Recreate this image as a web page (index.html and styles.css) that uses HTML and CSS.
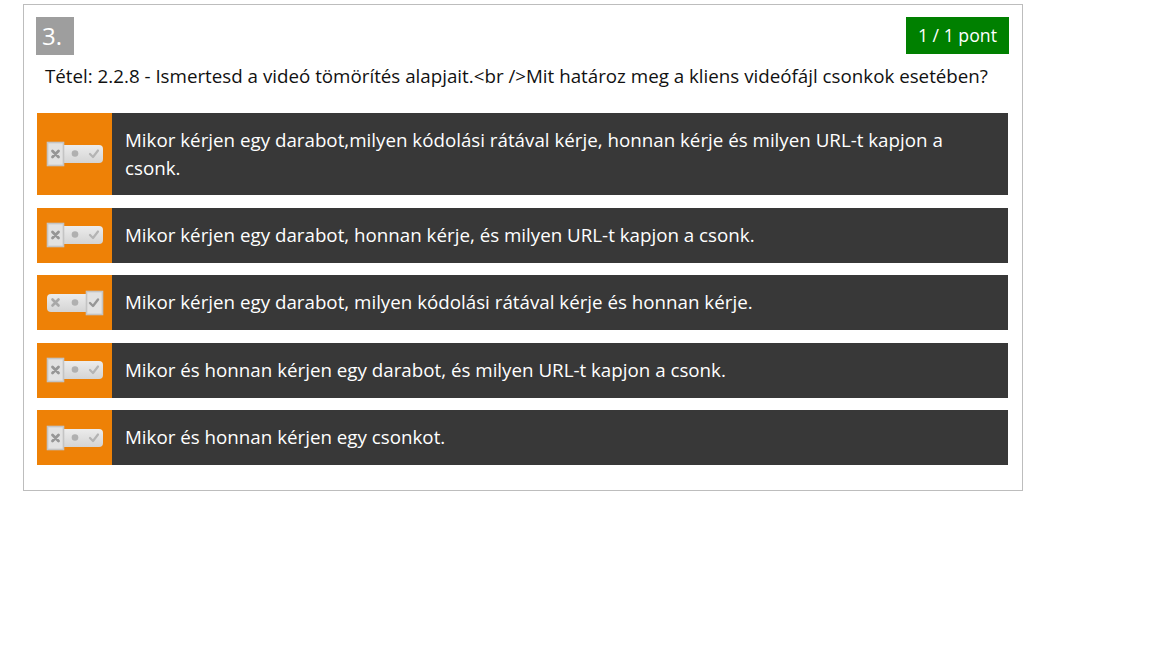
FILE: index.html
```html
<!DOCTYPE html>
<html lang="hu">
<head>
<meta charset="utf-8">
<title>Kérdés 3</title>
<link rel="stylesheet" href="styles.css">
</head>
<body>
<div class="question">
  <div class="q-head">
    <div class="q-num">3.</div>
    <div class="q-score">1 / 1 pont</div>
  </div>
  <div class="q-text">Tétel: 2.2.8 - Ismertesd a videó tömörítés alapjait.&lt;br /&gt;Mit határoz meg a kliens videófájl csonkok esetében?</div>
  <div class="answers">
    <div class="answer">
      <div class="a-mark">
        <svg class="toggle" width="58" height="26" viewBox="0 0 58 26"><use href="#tg"/><use href="#sel-x"/></svg>
      </div>
      <div class="a-text">Mikor kérjen egy darabot,milyen kódolási rátával kérje, honnan kérje és milyen URL-t kapjon a csonk.</div>
    </div>
    <div class="answer">
      <div class="a-mark">
        <svg class="toggle" width="58" height="26" viewBox="0 0 58 26"><use href="#tg"/><use href="#sel-x"/></svg>
      </div>
      <div class="a-text">Mikor kérjen egy darabot, honnan kérje, és milyen URL-t kapjon a csonk.</div>
    </div>
    <div class="answer">
      <div class="a-mark">
        <svg class="toggle" width="58" height="26" viewBox="0 0 58 26"><use href="#tg"/><use href="#sel-v"/></svg>
      </div>
      <div class="a-text">Mikor kérjen egy darabot, milyen kódolási rátával kérje és honnan kérje.</div>
    </div>
    <div class="answer">
      <div class="a-mark">
        <svg class="toggle" width="58" height="26" viewBox="0 0 58 26"><use href="#tg"/><use href="#sel-x"/></svg>
      </div>
      <div class="a-text">Mikor és honnan kérjen egy darabot, és milyen URL-t kapjon a csonk.</div>
    </div>
    <div class="answer">
      <div class="a-mark">
        <svg class="toggle" width="58" height="26" viewBox="0 0 58 26"><use href="#tg"/><use href="#sel-x"/></svg>
      </div>
      <div class="a-text">Mikor és honnan kérjen egy csonkot.</div>
    </div>
  </div>
</div>

<svg class="defs" width="0" height="0" aria-hidden="true">
  <defs>
    <linearGradient id="pillg" x1="0" y1="0" x2="0" y2="1">
      <stop offset="0" stop-color="#ececec"/>
      <stop offset="1" stop-color="#d4d4d4"/>
    </linearGradient>
    <g id="tg">
      <rect x="1" y="4" width="56" height="18" rx="4" fill="url(#pillg)"/>
      <path d="M6.5 9.5 L12.5 15.5 M12.5 9.5 L6.5 15.5" stroke="#a8a8a8" stroke-width="2.6" stroke-linecap="round"/>
      <circle cx="29" cy="12.5" r="3.3" fill="#b0b0b0"/>
      <path d="M44 13 L47 16 L52 9.5" stroke="#b4b4b4" stroke-width="2.2" fill="none" stroke-linecap="round" stroke-linejoin="round"/>
    </g>
    <g id="sel-x">
      <rect x="1.5" y="1.5" width="16" height="23" fill="#e2e2e2" stroke="#c4c4c4" stroke-width="1.6"/>
      <path d="M6.5 10 L12.5 16 M12.5 10 L6.5 16" stroke="#969696" stroke-width="2.8" stroke-linecap="round"/>
    </g>
    <g id="sel-v">
      <rect x="40.5" y="1.5" width="16" height="23" fill="#e2e2e2" stroke="#c4c4c4" stroke-width="1.6"/>
      <path d="M44 13 L47 16 L52 9.5" stroke="#969696" stroke-width="2.4" fill="none" stroke-linecap="round" stroke-linejoin="round"/>
    </g>
  </defs>
</svg>
</body>
</html>
```
FILE: styles.css
```css
* { box-sizing: border-box; }

body {
  margin: 0;
  padding: 4px 0 0 23px;
  background: #ffffff;
  font-family: "Open Sans", "Noto Sans", sans-serif;
  color: #111;
}

.question {
  width: 1000px;
  border: 1px solid #bdbdbd;
  padding: 12px 13px 25px 12px;
}

.q-head {
  display: flex;
  justify-content: space-between;
  align-items: flex-start;
  height: 38px;
}

.q-num {
  width: 38px;
  height: 38px;
  background: #9e9e9e;
  color: #fff;
  font-size: 24px;
  line-height: 38px;
  padding-left: 6px;
}

.q-score {
  height: 37px;
  background: #008000;
  color: #fff;
  font-size: 17.7px;
  line-height: 37px;
  padding: 0 12px;
}

.q-text {
  margin: 7px 0 23px 9px;
  font-size: 18.75px;
  line-height: 28px;
  color: #111;
}

.answers {
  display: flex;
  flex-direction: column;
  gap: 12.5px;
  padding: 0 1px;
}

.answer {
  display: flex;
  background: #383838;
  min-height: 55px;
}

.a-mark {
  width: 75px;
  flex: none;
  background: #ee8106;
  display: flex;
  align-items: center;
  padding-left: 9px;
}

.toggle { display: block; }

.a-text {
  flex: 1;
  color: #fff;
  font-size: 18.75px;
  line-height: 27.5px;
  padding: 13px 40px 14px 13px;
}

.defs { position: absolute; width: 0; height: 0; }
```
